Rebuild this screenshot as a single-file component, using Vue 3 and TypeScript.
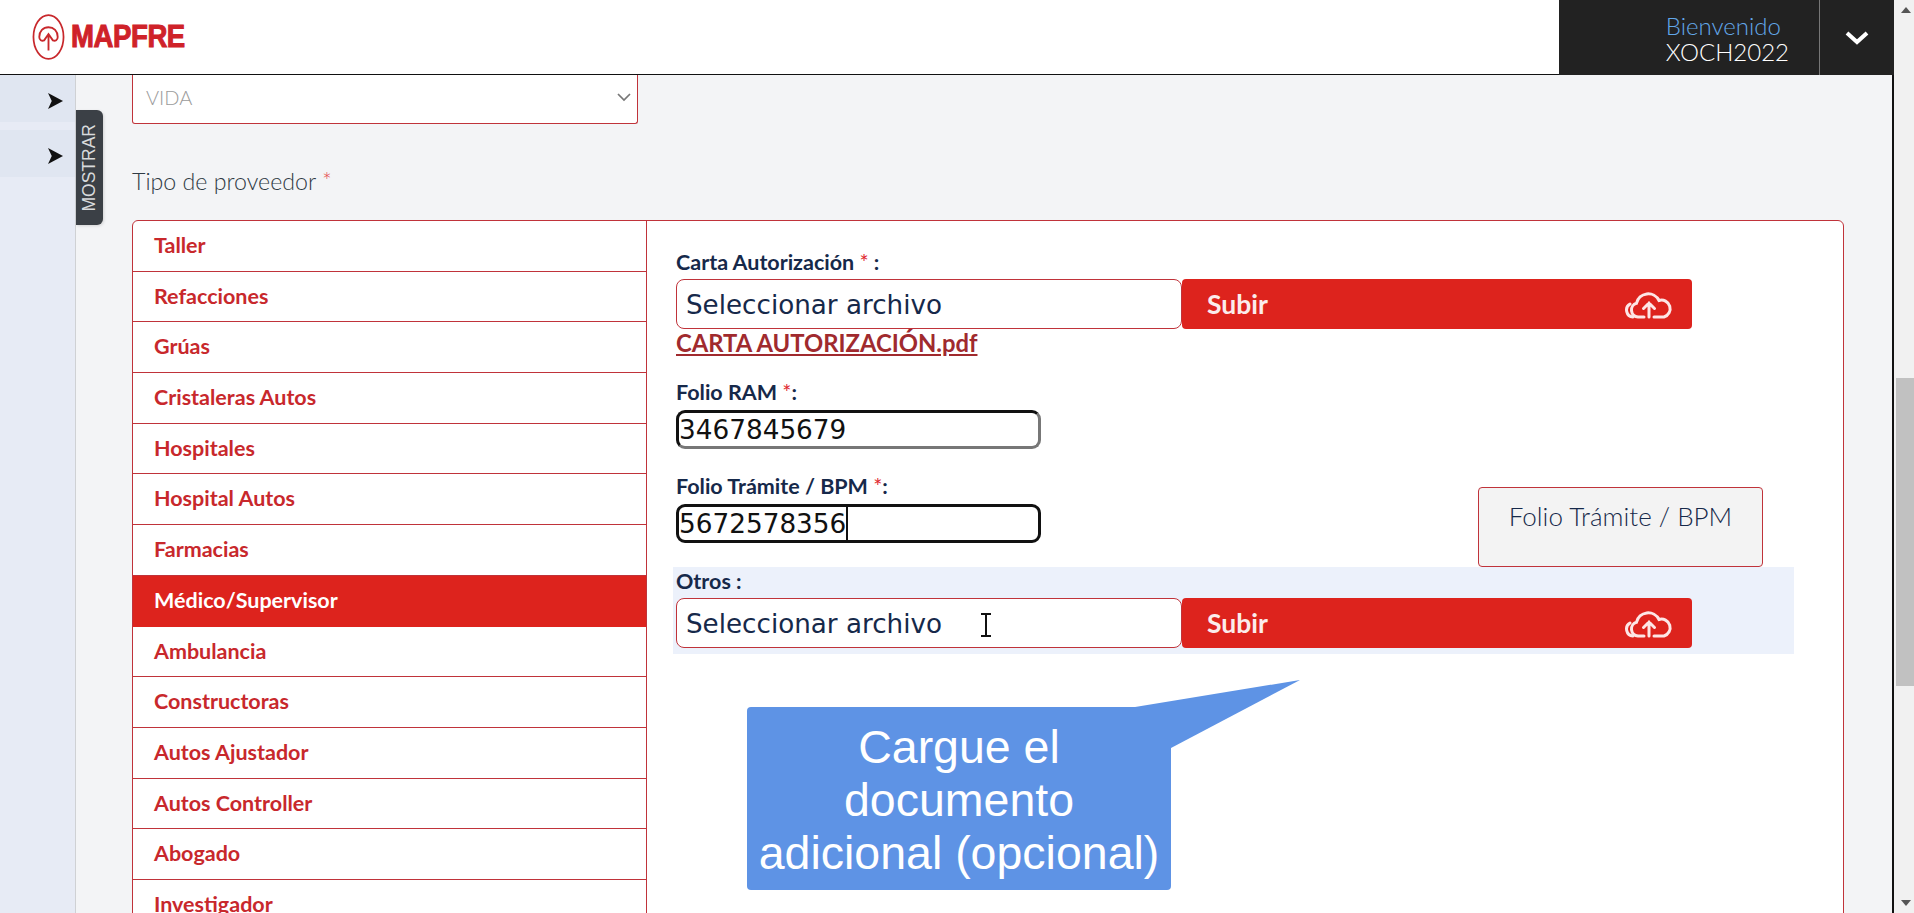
<script setup lang="ts">
const providers: string[] = [
  'Taller', 'Refacciones', 'Grúas', 'Cristaleras Autos', 'Hospitales', 'Hospital Autos', 'Farmacias',
  'Médico/Supervisor', 'Ambulancia', 'Constructoras', 'Autos Ajustador', 'Autos Controller', 'Abogado', 'Investigador',
]
const activeProvider = 'Médico/Supervisor'
</script>

<template>
  <div class="page">
    <header class="topbar">
      <div class="brand">
        <svg class="brand-mark" viewBox="0 0 34 48" aria-hidden="true">
          <ellipse cx="17" cy="24" rx="15.5" ry="22.500" fill="none" stroke="#c8282c" stroke-width="1.800" />
          <path d="M17 23V38M7.500 24c0-6 4-10 9.500-10s9.500 4 9.500 10c0 3-2.500 4.500-5 3.500L17 21l-4.500 6.500c-2.500 1-5-.5-5-3.500z" fill="none" stroke="#c8282c" stroke-width="1.900" />
        </svg>
        <span class="brand-name">MAPFRE</span>
      </div>
      <div class="user">
        <div class="user-text">
          <span class="welcome">Bienvenido</span>
          <span class="username">XOCH2022</span>
        </div>
        <div class="user-toggle">
          <svg width="24" height="14" viewBox="0 0 24 14"><path d="M2 2l10 9 10-9" fill="none" stroke="#fff" stroke-width="4" /></svg>
        </div>
      </div>
    </header>

    <div class="body">
      <aside class="sidebar">
        <div class="side-item"><span class="arrow"></span></div>
        <div class="side-item"><span class="arrow"></span></div>
        <div class="tab"><span>MOSTRAR</span></div>
      </aside>

      <main class="content">
        <div class="select">
          <span>VIDA</span>
          <svg width="14" height="9" viewBox="0 0 14 9"><path d="M1 1l6 6 6-6" fill="none" stroke="#777" stroke-width="1.700" /></svg>
        </div>
        <div class="type-label">Tipo de proveedor <span class="req">*</span></div>

        <section class="card">
          <ul class="providers">
            <li v-for="p in providers" :key="p" :class="{ active: p === activeProvider }">{{ p }}</li>
          </ul>
          <div class="panel">
            <label class="lbl first">Carta Autorización <span class="req">*</span> :</label>
            <div class="file-row">
              <div class="file-input">Seleccionar archivo</div>
              <div class="upload">
                <span>Subir</span>
                <svg width="48" height="30" viewBox="0 0 48 30" fill="none" stroke="#fde6e6" stroke-width="3" stroke-linecap="round">
                  <path d="M8 28a7 7 0 0 1-3-13" />
                  <path d="M19 28h-6a7 7 0 0 1-1.500-13.700A12 12 0 0 1 34 11.500a8.300 8.300 0 0 1 5 16.500H29" />
                  <path d="M24 28V14M18.500 19.500l5.500-5.500 5.500 5.500" />
                </svg>
              </div>
            </div>
            <a class="file-link">CARTA AUTORIZACIÓN.pdf</a>

            <label class="lbl ram">Folio RAM <span class="req">*</span>:</label>
            <div class="text-input">3467845679</div>

            <label class="lbl tram">Folio Trámite / BPM <span class="req">*</span>:</label>
            <div class="text-input focused">5672578356<i class="caret"></i></div>

            <div class="others">
              <label class="lbl">Otros :</label>
              <div class="file-row">
                <div class="file-input">Seleccionar archivo
                  <svg class="ibeam" width="14" height="24" viewBox="0 0 14 24"><path d="M2 1h10M7 1v22M2 23h10" fill="none" stroke="#111" stroke-width="2" /></svg>
                </div>
                <div class="upload">
                  <span>Subir</span>
                  <svg width="48" height="30" viewBox="0 0 48 30" fill="none" stroke="#fde6e6" stroke-width="3" stroke-linecap="round">
                    <path d="M8 28a7 7 0 0 1-3-13" />
                    <path d="M19 28h-6a7 7 0 0 1-1.500-13.700A12 12 0 0 1 34 11.500a8.300 8.300 0 0 1 5 16.500H29" />
                    <path d="M24 28V14M18.500 19.500l5.500-5.500 5.500 5.500" />
                  </svg>
                </div>
              </div>
            </div>

            <div class="tip">Folio Trámite / BPM</div>
            <div class="callout">
              <svg class="callout-tail" width="175" height="70" viewBox="0 0 175 70"><path d="M0 28L171 0L42 68L0 68z" fill="#5e93e5" /></svg>
              Cargue el<br />documento<br />adicional (opcional)
            </div>
          </div>
        </section>
      </main>

      <div class="scrollbar">
        <div class="scroll-arrow up"></div>
        <div class="track"><div class="thumb"></div></div>
        <div class="scroll-arrow down"></div>
      </div>
    </div>
  </div>
</template>

<style>
html, body { margin: 0; overflow: hidden; }
</style>

<style scoped>
.page { width: 1914px; height: 913px; overflow: hidden; display: flex; flex-direction: column; background: #f3f4f6; font-family: Lato, "Liberation Sans", sans-serif; }
.topbar { height: 74px; flex: none; background: #fff; display: flex; justify-content: space-between; border-bottom: 1px solid #111; margin-right: 20px; }
.brand { display: flex; align-items: center; gap: 6px; padding-left: 32px; }
.brand-mark { width: 33px; height: 48px; }
.brand-name { font-family: "Liberation Sans", sans-serif; font-weight: 700; font-size: 31px; color: #cf2229; transform: scaleX(0.89); transform-origin: left; letter-spacing: -0.5px; -webkit-text-stroke: 1px #cf2229; }
.user { width: 335px; margin-bottom: -1px; background: #222; display: flex; justify-content: flex-end; }
.user-text { display: flex; flex-direction: column; align-items: flex-start; padding: 13px 30px 0 0; font-size: 24px; font-weight: 300; line-height: 26px; }
.welcome { color: #62a8ea; }
.username { color: #fff; }
.user-toggle { width: 74px; border-left: 1px solid #777; display: flex; align-items: center; justify-content: center; }

.body { flex: 1; display: flex; min-height: 0; }
.sidebar { width: 75px; flex: none; background: #e7ebf5; border-right: 1px solid #cfd1d4; position: relative; }
.side-item { height: 47px; margin-bottom: 8px; padding: 5px 12px 0 0; background: #e0e6f1; display: flex; align-items: center; justify-content: flex-end; box-sizing: border-box; }
.arrow { width: 15px; height: 16px; background: #111; clip-path: polygon(0 0, 100% 50%, 0 100%, 25% 50%); }
.tab { position: absolute; left: 76px; top: 35px; width: 27px; height: 115px; background: #3b4046; border-radius: 0 6px 6px 0; display: flex; align-items: center; justify-content: center; box-shadow: 1px 1px 3px #0002; }
.tab span { writing-mode: vertical-rl; transform: rotate(180deg); color: #d8dadc; font-family: "Liberation Sans", sans-serif; font-size: 17.500px; }

.content { flex: 1; min-width: 0; padding: 0 48px 0 56px; border-right: 2px solid #111; }
.select { height: 44px; width: 485px; padding: 0 6px 4px 13px; background: #fff; border: 1px solid #c0333a; border-top: none; border-radius: 0 0 3px 3px; display: flex; align-items: center; justify-content: space-between; color: #9b9b9b; font-size: 20px; font-weight: 300; }
.type-label { margin-top: 43px; font-size: 23.200px; line-height: 28px; font-weight: 300; color: #2f3a44; }
.type-label .req { font-weight: 300; color: #e5484d; }
.req { color: #e0262c; font-weight: 400; }
.card { margin-top: 25px; display: flex; height: 800px; background: #fff; border: 1px solid #c0333a; border-radius: 6px; }
.providers { list-style: none; margin: 0; padding: 0; width: 513px; flex: none; border-right: 1px solid #c0333a; }
.providers li { height: 50.700px; box-sizing: border-box; padding: 0 0 0 21px; line-height: 48px; font-size: 21.500px; font-weight: 700; color: #c8282c; border-bottom: 1px solid #c0333a; }
.providers li.active { background: #dd231d; color: #fff; border-bottom-color: #dd231d; }

.panel { flex: 1; position: relative; padding: 0 0 0 29px; }
.lbl { display: block; font-size: 21.500px; font-weight: 700; line-height: 24px; color: #16294a; }
.lbl .req { font-weight: 400; }
.lbl.first { margin-top: 29px; }
.lbl.ram { margin-top: 23.500px; }
.lbl.tram { margin-top: 24.500px; }
.file-row { display: flex; height: 50px; margin-top: 5px; }
.file-input { width: 506px; box-sizing: border-box; border: 1px solid #c0333a; border-radius: 8px; background: #fff; display: flex; align-items: center; padding: 2px 0 0 9px; font-family: "DejaVu Sans", sans-serif; font-size: 26.200px; color: #16294a; position: relative; }
.ibeam { position: absolute; left: 302px; top: 14px; }
.upload { width: 510px; box-sizing: border-box; background: #dd231d; border-radius: 4px; display: flex; align-items: center; justify-content: space-between; padding: 0 19px 0 25px; color: #fbecec; font-size: 26.500px; font-weight: 700; }
.file-link { display: block; margin-top: 1px; height: 26px; line-height: 26px; font-size: 23.800px; font-weight: 700; color: #a02a2e; text-decoration: underline; }
.text-input { width: 365px; height: 39px; margin-top: 6.500px; box-sizing: border-box; border: 3px solid; border-color: #111 #777 #777 #111; border-radius: 9px; background: #fff; font-family: "DejaVu Sans", sans-serif; font-size: 26.300px; line-height: 34px; color: #111; display: flex; }
.text-input.focused { border-color: #111; }
.caret { display: block; width: 2px; height: 33px; background: #111; }
.others { margin: 23.500px 0 0 -3px; width: 1121px; height: 87px; box-sizing: border-box; padding: 2px 0 0 3px; background: #ecf1fb; }
.tip { position: absolute; left: 831px; top: 266px; width: 285px; height: 80px; box-sizing: border-box; background: #f3f3f3; border: 1px solid #c0333a; border-radius: 4px; padding-top: 12px; text-align: center; font-size: 26px; line-height: 32px; font-weight: 300; color: #16294a; }
.callout { position: absolute; left: 100px; top: 486px; width: 424px; height: 183px; background: #5e93e5; border-radius: 4px; color: #fff; text-align: center; font-family: "Liberation Sans", sans-serif; font-size: 46.500px; line-height: 53px; padding-top: 14px; box-sizing: border-box; }
.callout-tail { position: absolute; left: 382px; top: -27px; }

.scrollbar { width: 20px; flex: none; margin-top: -75px; background: #f1f1f1; display: flex; flex-direction: column; position: relative; z-index: 2; }
.scroll-arrow { height: 20px; flex: none; position: relative; }
.scroll-arrow::after { content: ""; position: absolute; left: 7px; border-left: 5.500px solid transparent; border-right: 5.500px solid transparent; }
.scroll-arrow.up::after { top: 7px; border-bottom: 6px solid #555; }
.scroll-arrow.down::after { bottom: 7px; border-top: 6px solid #555; }
.track { flex: 1; padding-top: 358px; }
.thumb { height: 308px; margin-left: 2px; background: #c1c1c1; }
</style>
